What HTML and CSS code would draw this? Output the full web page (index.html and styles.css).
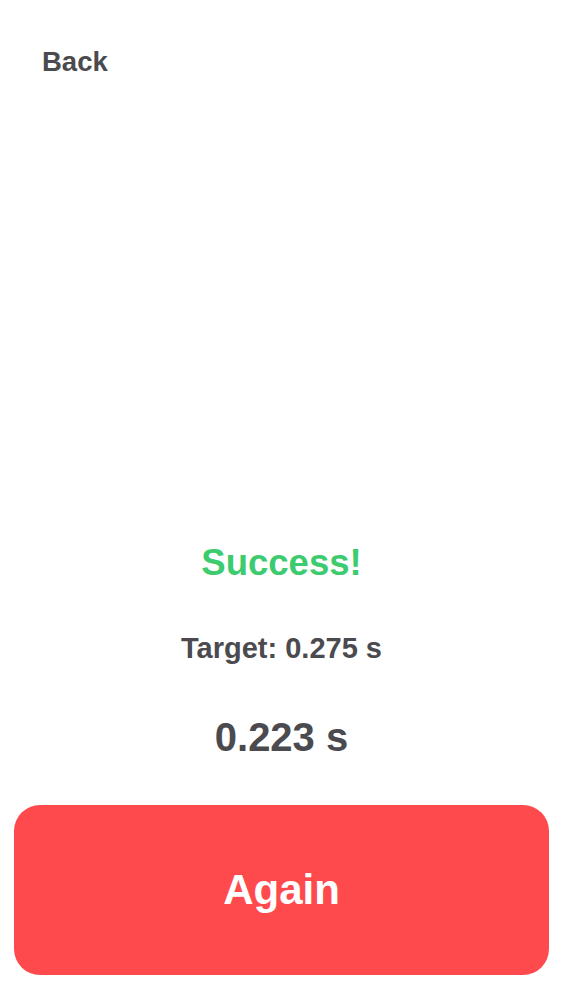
FILE: index.html
```html
<!DOCTYPE html>
<html>
<head>
<meta charset="utf-8">
<link rel="stylesheet" href="styles.css">
</head>
<body>
<div class="screen">
  <header class="top">
    <span class="back">Back</span>
  </header>
  <main class="result">
    <div class="status">Success!</div>
    <div class="target">Target: 0.275 s</div>
    <div class="time">0.223 s</div>
  </main>
  <footer class="actions">
    <button class="again">Again</button>
  </footer>
</div>
</body>
</html>
```

FILE: styles.css
```css
* { box-sizing: border-box; }
html, body {
  margin: 0;
  padding: 0;
  background: #ffffff;
  height: 100%;
}
body {
  font-family: "Liberation Sans", Arial, sans-serif;
  color: #4a4a4f;
}
.screen {
  height: 1000px;
  display: flex;
  flex-direction: column;
}
.top {
  padding: 45px 0 0 42px;
  line-height: 34px;
}
.back {
  font-size: 27.5px;
  font-weight: bold;
  color: #4a4a4f;
}
.result {
  flex: 1;
  display: flex;
  flex-direction: column;
  align-items: center;
  justify-content: flex-end;
  padding-bottom: 44px;
}
.status {
  font-size: 36.5px;
  line-height: 44px;
  font-weight: bold;
  color: #3ccb6e;
}
.target {
  margin-top: 46px;
  font-size: 29px;
  line-height: 34px;
  font-weight: bold;
}
.time {
  margin-top: 48px;
  font-size: 40px;
  line-height: 48px;
  font-weight: bold;
}
.actions {
  padding: 0 14px 25px 14px;
}
.again {
  width: 100%;
  height: 170px;
  border: none;
  border-radius: 26px;
  background: #ff4a4d;
  color: #ffffff;
  font-family: "Liberation Sans", Arial, sans-serif;
  font-size: 42px;
  font-weight: bold;
}
```
